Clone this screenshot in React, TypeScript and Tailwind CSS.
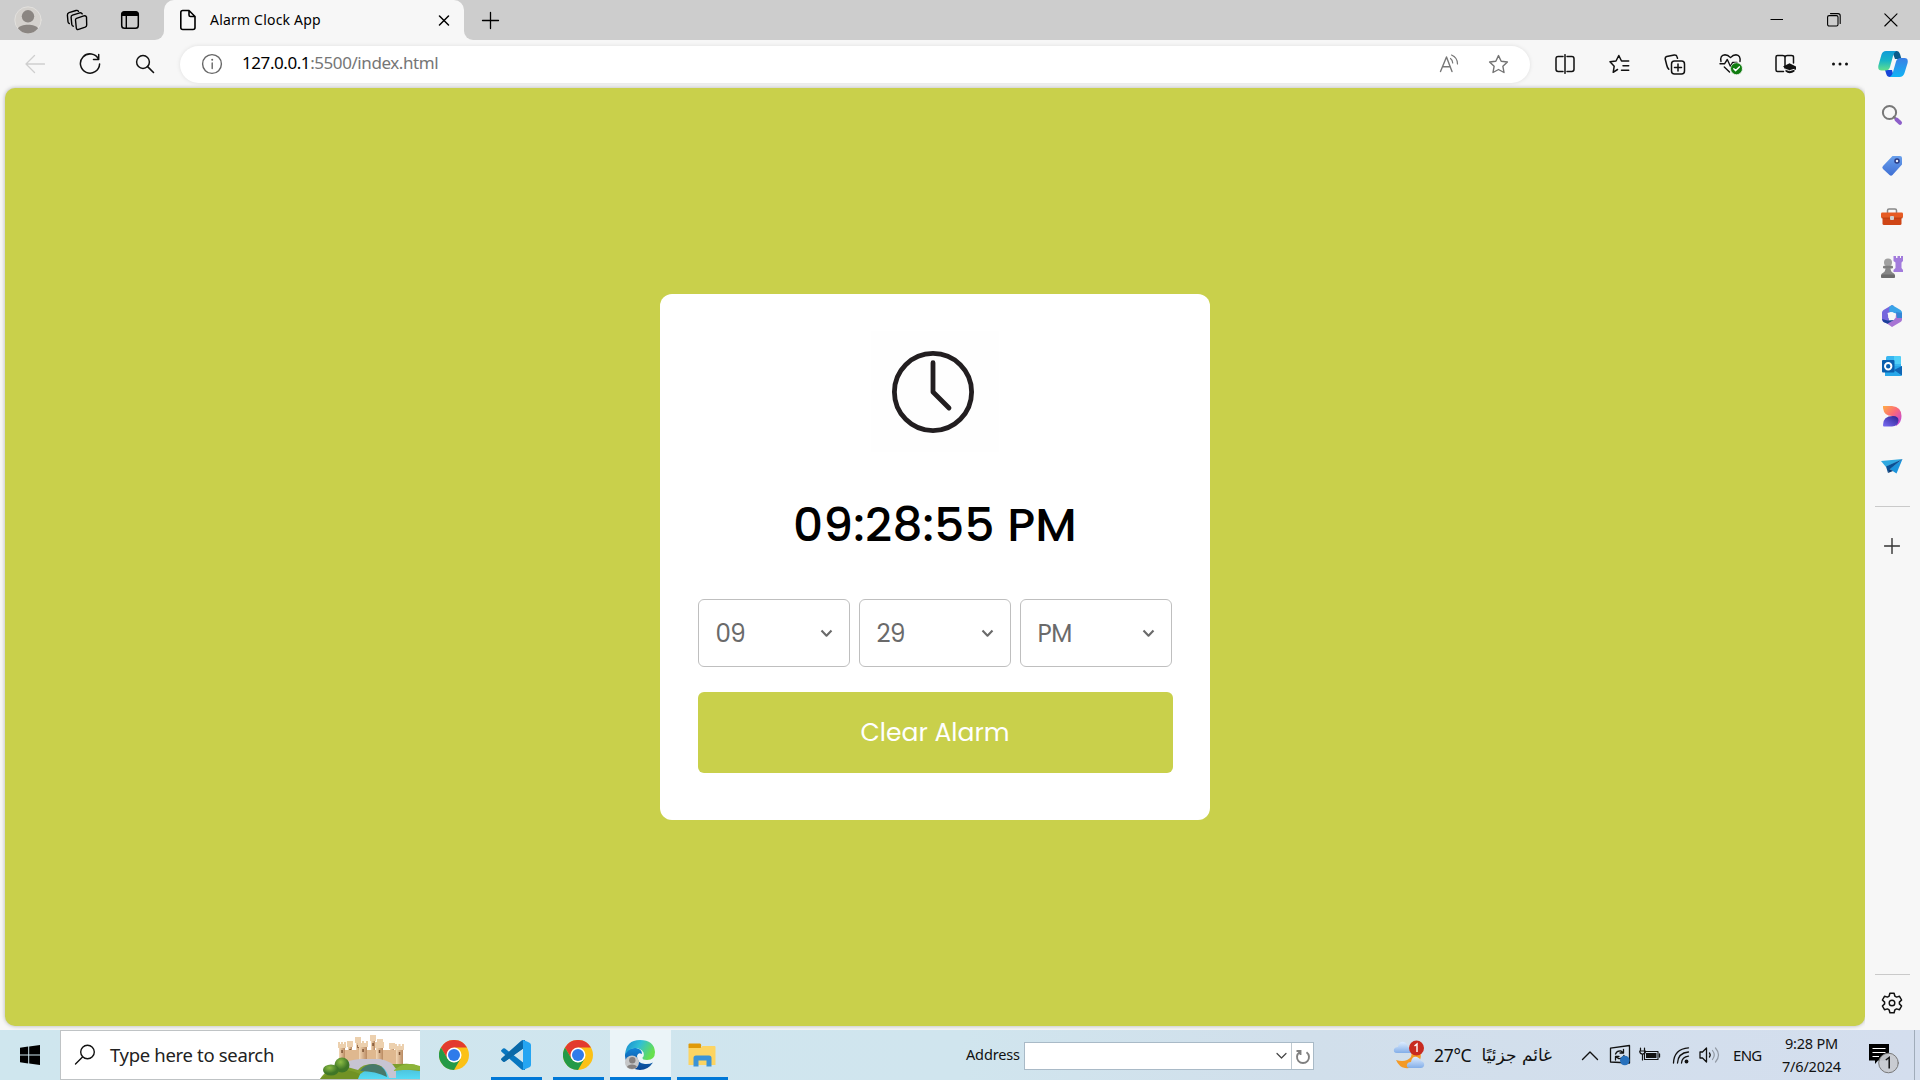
import React from "react";

type ArtProps = { w: number; h: number; className?: string; children: React.ReactNode };

function Art({ w, h, className = "", children }: ArtProps) {
  return (
    <svg
      width={w}
      height={h}
      viewBox={`0 0 ${w} ${h}`}
      fill="none"
      stroke="currentColor"
      strokeWidth={1.4}
      strokeLinecap="round"
      strokeLinejoin="round"
      className={`block shrink-0 ${className}`}
    >
      {children}
    </svg>
  );
}

function Slot({ className, children }: { className: string; children: React.ReactNode }) {
  return <div className={`flex shrink-0 items-center justify-center ${className}`}>{children}</div>;
}

const STAR = "M10.5 1.6 L13.2 7.2 L19.4 8 L14.9 12.3 L16 18.5 L10.5 15.5 L5 18.5 L6.1 12.3 L1.6 8 L7.8 7.2 Z";

function TabStrip() {
  return (
    <div className="flex h-10 shrink-0 items-center bg-[#cdcdcd] text-black">
      <Slot className="ml-[14px] w-7">
        <Art w={28} h={28}>
          <circle cx="14" cy="14" r="13.2" fill="#d4d1cd" stroke="#e2e0dd" strokeWidth="1" />
          <circle cx="14" cy="10.3" r="6.2" fill="#8b8682" stroke="none" />
          <path d="M4 22.5 C6 17.5 22 17.5 24 22.5 C21.5 25.7 18 27.4 14 27.4 C10 27.4 6.500 25.7 4 22.5Z" fill="#8b8682" stroke="none" />
        </Art>
      </Slot>
      <Slot className="ml-[24px] w-[23px]">
        <Art w={23} h={22}>
          <path d="M10.500 9.300 L17.800 6.900 Q19.800 6.200 20.500 8 L20.700 16 Q20.700 17.600 19.200 18.200 L12.600 20.400 Q10.500 20.900 10.300 19 L9.500 11 Q9.400 9.700 10.500 9.300Z" />
          <path d="M7.300 17.200 Q6 17 5.800 15.500 L5.100 8.500 Q5 6.700 6.500 6.200 L13.800 3.800 Q15.500 3.400 16.200 4.900" />
          <path d="M3.300 14.500 Q2.100 14.200 2 12.800 L1.400 6.300 Q1.300 4.300 3 3.700 L10 1.500 Q11.600 1 12.500 2.300" />
        </Art>
      </Slot>
      <Slot className="ml-[31px] w-5">
        <Art w={20} h={20}>
          <rect x="1.700" y="1.700" width="16.600" height="16.600" rx="2.800" strokeWidth="1.500" />
          <path d="M1.500 6V4Q1.500 1.500 4 1.500H16Q18.500 1.500 18.500 4V6Z" fill="currentColor" stroke="none" />
          <path d="M6.300 6V18" />
        </Art>
      </Slot>
      <div className="ml-[15px] h-10 w-[9px] bg-[#f7f7f7]">
        <div className="h-full w-full rounded-br-[10px] bg-[#cdcdcd]" />
      </div>
      <div className="flex h-10 w-[300px] items-center rounded-t-[10px] bg-[#f7f7f7]">
        <Art w={18} h={22} className="ml-[15px]">
          <path d="M3.500 1.500H10L16 7.500V18.500Q16 20.500 14 20.500H3.800Q1.800 20.500 1.800 18.500V3.500Q1.800 1.500 3.800 1.500M10 1.500V6Q10 7.500 11.500 7.500H16" strokeWidth="1.600" />
        </Art>
        <span className="ml-[13px] w-[220px] whitespace-nowrap text-[14px] leading-5 tracking-[0.2px]">Alarm Clock App</span>
        <Art w={12} h={12} className="ml-[8px]">
          <path d="M1.500 2L10.500 11M10.500 2L1.500 11" strokeWidth="1.500" />
        </Art>
      </div>
      <div className="h-10 w-[9px] bg-[#f7f7f7]">
        <div className="h-full w-full rounded-bl-[10px] bg-[#cdcdcd]" />
      </div>
      <Art w={19} h={19} className="ml-[8px]">
        <path d="M1.500 9.500H17.500M9.500 1.500V17.500" strokeWidth="1.300" />
      </Art>
      <div className="flex-1" />
      <Slot className="w-[57px]">
        <Art w={14} h={14}><path d="M.5 6.500H13" strokeWidth="1" strokeLinecap="butt" /></Art>
      </Slot>
      <Slot className="w-[57px]">
        <Art w={14} h={14}>
          <rect x=".6" y="2.600" width="10.400" height="10.400" rx="1.500" strokeWidth="1.100" />
          <path d="M3.500.6H11Q13.200.6 13.200 2.800V10.500" strokeWidth="1.100" />
        </Art>
      </Slot>
      <Slot className="w-[58px]">
        <Art w={14} h={14}><path d="M.8.8L13 13M13 .8L.8 13" strokeWidth="1.100" /></Art>
      </Slot>
    </div>
  );
}

function Toolbar() {
  return (
    <div className="flex h-12 shrink-0 items-center bg-[#f7f7f7] text-[#111]">
      <Slot className="ml-[7px] w-[55px] text-[#cfcfcf]">
        <Art w={20} h={20}><path d="M19.500 10H1M9.500 1.500L1 10L9.500 18.500" strokeWidth="1.300" /></Art>
      </Slot>
      <Slot className="w-[55px]">
        <Art w={22} h={22}><path d="M19.600 6.200A9.600 9.600 0 1 0 20.600 11M19.700 1.500V6.500H14.500" strokeWidth="1.500" /></Art>
      </Slot>
      <Slot className="w-[55px]">
        <Art w={20} h={20}><circle cx="8" cy="8" r="6.400" strokeWidth="1.500" /><path d="M12.600 12.600L18.500 18.500" strokeWidth="1.600" /></Art>
      </Slot>
      <div className="ml-2 flex h-[37px] w-[1350px] items-center rounded-full bg-white shadow-[0_0_4px_rgba(0,0,0,0.1)]">
        <Art w={22} h={22} className="ml-[21px] text-[#666]">
          <circle cx="11" cy="11" r="9.400" />
          <path d="M11.200 10V15.500" />
          <circle cx="11.200" cy="6.700" r="1" fill="currentColor" stroke="none" />
        </Art>
        <div className="-mt-[2px] ml-[19px] w-[1181px] whitespace-nowrap text-[17px] leading-6 tracking-[-0.43px] text-[#767676]">
          <span className="text-black">127.0.0.1</span>:5500/index.html
        </div>
        <Art w={20} h={20} className="ml-[16px] text-[#777]">
          <path d="M1.500 17.500L7.500 3L13 17.500M3.500 12.800H11.300" />
          <path d="M11.500 4.500Q13.600 6 13.700 9M12.500 1Q18.500 3.500 18.500 10" strokeWidth="1.200" />
        </Art>
        <Art w={21} h={20} className="ml-[29px] text-[#737373]"><path d={STAR} /></Art>
      </div>
      <Slot className="ml-[7px] w-[55px]">
        <Art w={20} h={20}>
          <path d="M8 2.500H3.200Q1 2.500 1 4.700V15.300Q1 17.500 3.200 17.500H8M12 2.500H16.800Q19 2.500 19 4.700V15.300Q19 17.500 16.800 17.500H12M10 .7V19.300" strokeWidth="1.500" />
        </Art>
      </Slot>
      <Slot className="w-[55px]">
        <Art w={21} h={20}>
          <path d="M8.500 15.500L4.200 18.300L5.200 12.200L1 7.800L7 7L9.800 1.500L12.500 7H19.700M14 11.800H19.700M12.500 16.300H19.700" strokeWidth="1.500" />
        </Art>
      </Slot>
      <Slot className="w-[55px]">
        <Art w={22} h={21}>
          <rect x="7.500" y="7" width="13" height="13" rx="3" strokeWidth="1.500" />
          <path d="M14 10V17M10.500 13.500H17.500M4.800 15.300Q3.200 13.500 2.700 11L1.200 5Q.9 3.200 2.700 2.500L10.200.9Q12.600.7 13 2.700L13.500 4.200" strokeWidth="1.500" />
        </Art>
      </Slot>
      <Slot className="w-[55px]">
        <Art w={24} h={22} className="translate-x-px">
          <path d="M2 8.500Q.7 2 6 1.700Q9 1.700 11.500 4.600Q14 1.700 17 1.700Q21.800 2 21 8.500M1 10.800H5.500L8.300 6.500L11.500 13.500L13.500 9.500H18M5.300 14L10.500 19" strokeWidth="1.400" />
          <circle cx="17.500" cy="15.700" r="6" fill="#107c10" stroke="#f7f7f7" strokeWidth=".7" />
          <path d="M14.800 15.800L16.700 17.600L20.300 13.900" stroke="#fff" strokeWidth="1.500" />
        </Art>
      </Slot>
      <Slot className="w-[55px]">
        <Art w={22} h={22}>
          <path d="M9.500 18.500H3.500Q2 18.500 2 17V4Q2 2.500 3.500 2.500H8.500Q11 2.500 11 4.500V15M11 4.500Q11 2.500 13.500 2.500H17.500Q19.500 2.500 19.500 4V10" strokeWidth="1.500" />
          <path d="M9 13.500L15.500 10.300L22 13.500V17L20.500 16V18.500Q15.500 22 11.500 18.500V15.500Z" fill="currentColor" stroke="none" />
          <path d="M11.500 16.500Q15.500 19 20 16.500" stroke="#f7f7f7" strokeWidth="1" />
        </Art>
      </Slot>
      <Slot className="w-[55px]">
        <Art w={18} h={4}>
          <g fill="currentColor" stroke="none"><circle cx="2.500" cy="2" r="1.500" /><circle cx="9" cy="2" r="1.500" /><circle cx="15.500" cy="2" r="1.500" /></g>
        </Art>
      </Slot>
      <Slot className="w-[52px]">
        <Art w={30} h={28}>
          <defs>
            <linearGradient id="cpA" x1="0" y1="0" x2="0" y2="1"><stop stopColor="#0f9bd7" /><stop offset=".5" stopColor="#18b5c6" /><stop offset="1" stopColor="#63e08c" /></linearGradient>
            <linearGradient id="cpB" x1="0" y1="0" x2="0" y2="1"><stop stopColor="#3b7fe4" /><stop offset="1" stopColor="#12b4f5" /></linearGradient>
          </defs>
          <g stroke="none">
            <path d="M14 1H19Q21 1 22 4L23.500 9H17Z" fill="#0b5c8c" />
            <path d="M7 20H14L16 27H12Q9 27 8.300 24Z" fill="#1746d8" />
            <path d="M8 1H18.500Q16 2 15 6L12 17Q11 20.500 7.500 20.500H3.500Q-.5 20.500.4 15.500L3.500 4.500Q4.600 1 8 1Z" fill="url(#cpA)" />
            <path d="M22.500 8H26.500Q30.500 8 29.600 13L26.500 23Q25.200 27 21.500 27H11.500Q14 26 15 22L18 11.500Q19 8 22.500 8Z" fill="url(#cpB)" />
          </g>
        </Art>
      </Slot>
    </div>
  );
}

function TimeSelect({ value, className }: { value: string; className: string }) {
  return (
    <div className="flex h-[68px] w-[152px] items-center justify-between rounded-[6px] border border-[#bfbfbf] pl-[17px] pr-[16px] pt-px text-[#6a6a6a]">
      <span className={`pt-px text-[24.5px] leading-none ${className}`}>{value}</span>
      <Art w={13} h={9}><path d="M1.500 1.500L6.500 6.700L11.500 1.500" strokeWidth="2.100" strokeLinecap="butt" /></Art>
    </div>
  );
}

function AlarmCard() {
  return (
    <div className="flex h-[526px] w-[550px] flex-col items-center rounded-[12px] bg-white font-['Poppins',Inter,sans-serif]">
      <div className="mt-[37px] flex h-[121px] w-[128px] items-center justify-center bg-[#fefefe]">
        <Art w={84} h={84} className="mr-[4px] text-[#221e20]">
          <circle cx="42" cy="42" r="38.600" strokeWidth="4.800" />
          <path d="M42 12.700V42L58 58" strokeWidth="4.800" />
        </Art>
      </div>
      <div className="mt-[44px] flex h-[56px] items-center whitespace-nowrap text-[47px] font-medium leading-none tracking-[0.2px] text-black">09:28:55 PM</div>
      <div className="mt-[47px] flex w-[475px] gap-[9px]">
        <TimeSelect value="09" className="tracking-[-0.6px]" />
        <TimeSelect value="29" className="tracking-[-0.6px]" />
        <TimeSelect value="PM" className="tracking-[-0.5px]" />
      </div>
      <div className="mt-[25px] flex h-[81px] w-[475px] items-center justify-center rounded-[6px] bg-[#c9d04b] text-[25px] tracking-[0.03px] text-white">Clear Alarm</div>
    </div>
  );
}

function Sidebar() {
  const slot = "h-[50px]";
  return (
    <div className="flex w-[55px] shrink-0 flex-col items-center bg-[#f7f7f7] pr-px pt-[2px] text-[#333]">
      <Slot className={slot}>
        <Art w={22} h={22}>
          <circle cx="8.500" cy="8.500" r="6.600" stroke="#777" strokeWidth="2" />
          <path d="M12.800 12.800L15 15" stroke="#777" strokeWidth="2" />
          <path d="M15.500 15.500L19 18.800" stroke="#8d5fc9" strokeWidth="4" />
        </Art>
      </Slot>
      <Slot className="h-[52px]">
        <Art w={22} h={22}>
          <defs><linearGradient id="tag" x1="0" y1="0" x2="0" y2="1"><stop stopColor="#69a0ec" /><stop offset="1" stopColor="#3f6fd4" /></linearGradient></defs>
          <path d="M11.500 1H19Q21 1 21 3V9.500L11.500 20Q10 21.500 8.500 20L2 14Q.5 12.500 2 11Z" fill="url(#tag)" stroke="none" />
          <circle cx="16" cy="6" r="2" stroke="#2a3b82" fill="#e9eefc" strokeWidth="1.500" />
        </Art>
      </Slot>
      <Slot className={slot}>
        <Art w={22} h={18}>
          <path d="M6.500 5V2.500Q6.500 1 8 1H14Q15.500 1 15.500 2.500V5" stroke="#888" strokeWidth="1.500" />
          <rect x="1.500" y="7" width="19" height="10" rx="1.500" fill="#cf4516" stroke="none" />
          <rect x="0" y="4.500" width="22" height="5.500" rx="1.200" fill="#e65b24" stroke="none" />
          <path d="M1 10H21" stroke="#ad390f" strokeWidth=".7" />
          <rect x="9" y="8" width="4" height="4" rx="1" fill="#d0d0d0" stroke="none" />
        </Art>
      </Slot>
      <Slot className="h-[49px]">
        <Art w={22} h={22}>
          <g stroke="none">
            <path d="M12.500 0H15V2H16.500V0H19V2H20V0H22V5L20.500 6.500V12L22 14V16H12.500V14L14.500 12V6.500L12.500 5Z" fill="#a27bdc" />
            <circle cx="7" cy="6.500" r="4" fill="#a0a0a0" />
            <rect x="2" y="9.800" width="10" height="2.700" rx="1.300" fill="#7e7e7e" />
            <path d="M4.500 12H9.500Q9.500 16 13 17.500Q14.300 18.500 14 21Q13.800 22 12.500 22H1.500Q.2 22 0 21Q-.3 18.500 1 17.500Q4.500 16 4.500 12Z" fill="#878787" />
            <rect x="0" y="18.500" width="14" height="3.500" rx="1.500" fill="#6c6c6c" />
          </g>
        </Art>
      </Slot>
      <Slot className={slot}>
        <Art w={20} h={22}>
          <g stroke="none">
            <path d="M10 0L1.500 5Q0 6 0 7.500V14.500Q0 16 1.500 17L6.500 19L7 14L5.500 8L12 6V1Z" fill="#7566dd" />
            <path d="M7.500 1.500L10 0L18.500 5Q20 6 20 7.500V12L14 8.500L7 6.500Z" fill="#3aa4e8" />
            <path d="M20 8V14.500Q20 16 18.500 17L10 22L5 18.500L12 15L14.500 8Z" fill="#a774d4" />
            <path d="M14 7L20 8V13L15 13Z" fill="#3486d6" />
            <path d="M0 14L5.500 15.500L12 15L5.500 18.700L1.500 17Z" fill="#1c3f99" />
            <path d="M10 7L13.700 9V13L10 15L6.300 13V9Z" fill="#f7f7f7" />
          </g>
        </Art>
      </Slot>
      <Slot className={slot}>
        <Art w={20} h={20}>
          <g stroke="none">
            <rect x="4" y="0" width="15" height="18" rx="1.500" fill="#38b6f1" />
            <path d="M12 0H17.500Q19 0 19 1.500V8H12Z" fill="#50d0f8" />
            <path d="M3 10H20V18.500Q20 20 18.500 20H3Z" fill="#28a8ea" />
            <path d="M20 10V19.500L12 14Z" fill="#1066b5" />
            <rect x="0" y="4" width="12.500" height="12.500" rx="1" fill="#0a5fae" />
          </g>
          <circle cx="6.200" cy="10.200" r="3.200" stroke="#fff" strokeWidth="2" />
        </Art>
      </Slot>
      <Slot className="h-[49px]">
        <Art w={20} h={22}>
          <defs>
            <linearGradient id="dsA" x1="0" y1="0" x2="1" y2="1"><stop stopColor="#ffae45" /><stop offset=".45" stopColor="#fb6a78" /><stop offset="1" stopColor="#b43df0" /></linearGradient>
            <linearGradient id="dsB" x1="0" y1="1" x2="1" y2="0"><stop stopColor="#7a6df5" /><stop offset="1" stopColor="#2b1f8e" /></linearGradient>
          </defs>
          <path d="M1 1H10Q19.500 2 19.500 11Q19.500 18 14 21L10 11Q2 11 1 3Z" fill="url(#dsA)" stroke="none" />
          <path d="M1 20Q1 11 11 11Q16.500 11 16.500 15.500Q16 21 10 21.500H2Q1 21.500 1 20Z" fill="url(#dsB)" stroke="none" />
        </Art>
      </Slot>
      <Slot className="h-[51px]">
        <Art w={22} h={16}>
          <g stroke="none">
            <path d="M0 3L21.500 1L5 9Z" fill="#2fa8e0" />
            <path d="M21.500 1L15.500 15.500L8.500 11Z" fill="#1b94dc" />
            <path d="M5 8.500L21.500 1L9 11L7 15Z" fill="#0a4f93" />
            <path d="M8.500 11L12 13L7 15Z" fill="#0c3b74" />
          </g>
        </Art>
      </Slot>
      <div className="mt-[15px] h-px w-[35px] bg-[#cacaca]" />
      <Art w={16} h={16} className="mt-[31px]"><path d="M.5 8H15.500M8 .5V15.500" /></Art>
      <div className="flex-1" />
      <div className="h-px w-[35px] bg-[#cacaca]" />
      <Art w={22} h={22} className="mb-[16px] mt-[17px] text-[#111]">
        <path d="M8.900 1.200H13.100L13.900 4.200L15.500 5.100L18.500 4.300L20.600 8L18.400 10.100V11.900L20.600 14L18.500 17.700L15.500 16.900L13.900 17.800L13.100 20.800H8.900L8.100 17.800L6.500 16.900L3.500 17.700L1.400 14L3.600 11.900V10.100L1.400 8L3.500 4.300L6.500 5.100L8.100 4.200Z" strokeWidth="1.500" />
        <circle cx="11" cy="11" r="2.800" />
      </Art>
    </div>
  );
}

function ChromeLogo() {
  return (
    <Art w={30} h={30}>
      <g stroke="none">
        <circle cx="15" cy="15" r="15" fill="#fbc116" />
        <path d="M2 7.500A15 15 0 0 1 28 7.500H15L8.500 18.800Z" fill="#e33b2e" />
        <path d="M2 7.500A15 15 0 0 0 15 30L21.500 18.800L15 22.500L8.500 18.800Z" fill="#249a47" />
        <circle cx="15" cy="15" r="7.500" fill="#fff" />
        <circle cx="15" cy="15" r="6" fill="#2f7bea" />
      </g>
    </Art>
  );
}

function Castle() {
  const tower = (x: number, y: number, w: number, h: number) => (
    <g key={`${x}-${y}`}>
      <rect x={x} y={y + 3} width={w} height={h} fill="url(#stone)" />
      <path d={`M${x - 1} ${y}h2v2h${w / 2 - 2}v-2h2v2h${w / 2 - 2}v-2h2v6h-${w + 2}z`} fill="#ecd0ae" />
      <rect x={x + w / 2 - 0.7} y={y + 8} width="1.5" height="3" fill="#7d5334" />
    </g>
  );
  return (
    <Art w={100} h={46}>
      <defs>
        <linearGradient id="stone" x1="0" y1="0" x2="1" y2="0"><stop stopColor="#f4d9b8" /><stop offset="1" stopColor="#b98a61" /></linearGradient>
        <linearGradient id="lake" x1="0" y1="0" x2="0" y2="1"><stop stopColor="#4bbdd6" /><stop offset="1" stopColor="#55dbf5" /></linearGradient>
        <radialGradient id="bush" cx=".4" cy=".3"><stop stopColor="#8dbd45" /><stop offset="1" stopColor="#3f7626" /></radialGradient>
      </defs>
      <g stroke="none">
        {tower(28, 8, 4, 22)}
        {tower(36, 4, 4, 24)}
        {tower(51, 2, 4, 24)}
        {tower(58, 6, 4, 24)}
        {tower(70, 10, 4, 20)}
        <rect x="21" y="17" width="60" height="16" fill="#dfb88f" />
        {tower(19, 9, 6, 24)}
        {tower(39, 8, 8, 24)}
        {tower(56, 9, 7, 24)}
        {tower(76, 11, 7, 22)}
        <path d="M0 46Q8 33 28 31H80Q100 29 100 38V46Z" fill="#7d9e2c" />
        <path d="M36 46Q44 34 62 34L100 38V46Z" fill="url(#lake)" />
        <path d="M20 32Q28 27 40 26H60Q72 28 76 36V45H69Q65 31 53 31Q42 31 38 37Z" fill="#c7c4d2" />
        <path d="M40 38Q45 31 53 31Q65 32 67 44Q56 38 40 38Z" fill="#47796a" />
        <path d="M73 38Q84 27 100 33V37Q88 36 73 38Z" fill="#8db43a" />
        <path d="M0 46Q18 31 40 41L38 46Z" fill="#719224" />
        <circle cx="22" cy="32" r="7.500" fill="url(#bush)" />
        <ellipse cx="11" cy="37" rx="8" ry="5.500" fill="url(#bush)" />
      </g>
    </Art>
  );
}

function TaskApp({ className, active, children }: { className: string; active?: boolean; children: React.ReactNode }) {
  return (
    <div className={`flex h-[50px] shrink-0 flex-col items-center ${active ? "bg-[#ebf4f8]" : ""} ${className}`}>
      <div className="flex h-[47px] items-center pr-px pt-[3px]">{children}</div>
      <div className="h-[3px] w-full bg-[#0078d7]" />
    </div>
  );
}

function Taskbar() {
  return (
    <div className="flex h-[50px] shrink-0 items-center bg-[linear-gradient(90deg,#cfe6ee_0%,#d0e5ee_50%,#d1dfeb_68%,#d4deee_100%)] text-[#111]">
      <Slot className="h-full w-[60px]">
        <Art w={20} h={20}>
          <path d="M0 2.800L8.200 1.600V9.500H0ZM9.200 1.500L20 0V9.500H9.200ZM0 10.500H8.200V18.400L0 17.200ZM9.200 10.500H20V20L9.200 18.500Z" fill="#000" stroke="none" />
        </Art>
      </Slot>
      <div className="flex h-[50px] w-[360px] items-end border border-r-0 border-[#bfc3c5] bg-white">
        <Art w={22} h={22} className="mb-[13px] ml-[13px]">
          <circle cx="13.500" cy="8" r="6.800" /><path d="M8.500 13L1.500 20" />
        </Art>
        <span className="mb-[11px] ml-[14px] w-[210px] whitespace-nowrap text-[18.500px] leading-[26px] tracking-[-0.33px] text-[#222]">Type here to search</span>
        <Castle />
      </div>
      <div className="ml-[19px] mt-0"><ChromeLogo /></div>
      <TaskApp className="ml-[22px] w-[51px]">
        <Art w={30} h={30}>
          <g stroke="none">
            <path d="M0 10.500L2 8.500Q3 8 4 8.500L24 24V30H22Q21 30 20 29L.5 11.700Q0 11 0 10.500Z" fill="#0877c0" />
            <path d="M0 19.500Q0 19 .5 18.300L20 1Q21 0 22 0H24V7L4 21.500Q3 22 2 21.500Z" fill="#0d6eb3" />
            <path d="M0 19.500L20 1.500L23 8L4 21.500Q3 22 2 21.500Z" fill="#0969a8" />
            <path d="M22 0Q22.800 0 28.500 2.700Q30 3.400 30 5V25Q30 26.600 28.500 27.300L22 30Z" fill="#25a5f2" />
          </g>
        </Art>
      </TaskApp>
      <TaskApp className="ml-[11px] w-[51px]"><ChromeLogo /></TaskApp>
      <TaskApp className="ml-[6px] w-[61px]" active>
        <Art w={30} h={30}>
          <defs>
            <linearGradient id="edT" x1="0" y1="0" x2="1" y2=".4"><stop stopColor="#1687d0" /><stop offset=".5" stopColor="#31bfd5" /><stop offset="1" stopColor="#67e04f" /></linearGradient>
            <linearGradient id="edB" x1="0" y1="0" x2="0" y2="1"><stop stopColor="#1285d8" /><stop offset="1" stopColor="#0a4692" /></linearGradient>
          </defs>
          <g stroke="none">
            <path d="M0 14Q3 7 11 8Q17 9 17 14Q13 12 12 16Q12 23 20 24Q24 24.500 28 22.500Q23 30 15 30Q1 29 0 16Z" fill="url(#edB)" />
            <path d="M0 15Q1 0 15 0Q29 0 30 12Q30 20 22 20Q17 20 17.500 17.500Q19.500 16 18.500 12.500Q16 8 10 8Q3 8.500 0 15Z" fill="url(#edT)" />
            <circle cx="7" cy="22.500" r="7" fill="#c6c7c8" />
            <circle cx="7.300" cy="20.300" r="3.200" fill="#85817f" />
            <path d="M2 27Q3 24.500 7 24.500Q11 24.500 12 27Q7 31 2 27Z" fill="#85817f" />
          </g>
        </Art>
      </TaskApp>
      <TaskApp className="ml-[6px] w-[51px]">
        <Art w={28} h={24}>
          <g stroke="none">
            <path d="M.5 1.500Q.5.5 1.500.5H12Q13 .5 13.200 2L13 5H.5Z" fill="#e09a08" />
            <path d="M.5 5H12.500L14.500 3H26.500Q27.500 3 27.500 4V22H.5Z" fill="#fcd462" />
            <path d="M5.500 23.500V15Q5.500 12.500 8 12.500H21Q23.500 12.500 23.500 15V23.500H18.500V17.500H10.500V23.500Z" fill="#3b93d7" />
          </g>
        </Art>
      </TaskApp>
      <span className="-mt-[2px] ml-[238px] w-[58px] whitespace-nowrap text-[14.500px] leading-5 tracking-[-0.15px]">Address</span>
      <div className="mt-[2px] flex h-7 w-[290px] items-center justify-end border border-[#a9bac7] bg-white">
        <Art w={11} h={8} className="mr-[4px]"><path d="M1 1.500L5.500 6L10 1.500" stroke="#444" strokeWidth="1.200" /></Art>
        <div className="flex h-full w-[22px] items-center justify-center border-l border-[#bfc9d0]">
          <Art w={16} h={16} className="translate-y-px"><path d="M4.500 3.200A6 6 0 1 0 11.500 3.200M1.500 2H5.500V6" stroke="#808080" strokeWidth="1.900" strokeLinecap="butt" strokeLinejoin="miter" /></Art>
        </div>
      </div>
      <Art w={32} h={30} className="ml-[79px]">
        <defs><linearGradient id="cloud" x1="0" y1="0" x2="0" y2="1"><stop stopColor="#ddecff" /><stop offset="1" stopColor="#83aee8" /></linearGradient></defs>
        <g stroke="none">
          <path d="M27 11Q29 17 26 22Q21 29 12 28Q6 27 3 20Q13 23 18 17Q19 14 18.500 12Z" fill="#f49a26" />
          <path d="M4 13Q0 13 1 9Q2 7 5 7Q6 1 11 2Q14 3 15 7Q19 8 18 13Z" fill="url(#cloud)" />
          <path d="M17 28Q13 28 14 24Q15 22 18 22Q19 16 24 17Q27 18 28 21Q32 22 31 26Q30 28 28 28Z" fill="url(#cloud)" />
          <circle cx="23.500" cy="8" r="7.500" fill="#c82b20" />
        </g>
        <path d="M21.500 6L24 4V12" stroke="#fff" strokeWidth="1.400" strokeLinecap="butt" strokeLinejoin="miter" />
      </Art>
      <span className="ml-[9px] w-[48px] whitespace-nowrap text-[17.500px] leading-6 tracking-[-0.3px]">27°C</span>
      <span dir="rtl" className="w-[70px] whitespace-nowrap text-right text-[17px] leading-6 font-['Segoe_UI','DejaVu_Sans',sans-serif]">غائم جزئيًا</span>
      <Art w={18} h={11} className="ml-[29px]"><path d="M1.500 9.500L9 2L16.500 9.500" /></Art>
      <Art w={22} h={22} className="ml-[10px]">
        <path d="M1.500 4.200L20.500 1.500V19L1.500 18Z" strokeWidth="1.300" />
        <path d="M6.500 10Q8 6.500 12 7L14 8.500M14.500 5.500V9H11M15 11.500Q13.500 15.500 9.500 14.500L7 13M6.500 16V12.500H10" strokeWidth="1.300" />
        <circle cx="15.800" cy="16.500" r="4.800" fill="#2871bd" stroke="none" />
      </Art>
      <Art w={22} h={16} className="ml-[8px]">
        <path d="M1.500 1V4M5.500 1V4M.7 4H6.500Q6.500 7 3.600 7Q.7 7 .7 4M3.500 7V13" strokeWidth="1.200" />
        <rect x="5.500" y="4.500" width="13.500" height="8" strokeWidth="1.100" /><rect x="7" y="6" width="10.500" height="5" fill="currentColor" stroke="none" />
        <path d="M20.500 7V10" strokeWidth="1.300" />
      </Art>
      <Art w={18} h={18} className="ml-[11px]">
        <path d="M1.500 17Q2 3 16.500 1.800M5.500 17Q6 7 16.500 6M9.500 17Q10 11 16.500 10.200" strokeWidth="1.300" />
        <circle cx="14.500" cy="15.500" r="1.900" fill="currentColor" stroke="none" />
      </Art>
      <Art w={22} h={18} className="ml-[9px]">
        <path d="M1 6H3.500L7.500 2V16L3.500 12H1ZM10.500 7Q12 9 10.500 11" strokeWidth="1.300" />
        <path d="M13.500 4.500Q17 9 13.500 13.500M16.500 2Q22.500 9 16.500 16" stroke="#929aa5" strokeWidth="1.200" />
      </Art>
      <span className="ml-[12px] w-[32px] whitespace-nowrap text-[15px] leading-5 tracking-[-0.7px]">ENG</span>
      <div className="ml-[4px] flex w-[85px] flex-col items-center whitespace-nowrap text-[14.500px] leading-[23px] tracking-[-0.2px]">
        <span>9:28 PM</span>
        <span>7/6/2024</span>
      </div>
      <Art w={32} h={32} className="ml-[14px] mt-[6px]">
        <path d="M1 2H21V18.500H10L7 22V18.500H1Z" fill="#000" stroke="none" />
        <path d="M4.500 6.500H17.500M4.500 10.500H17.500M4.500 14.500H11" stroke="#fff" strokeWidth="1.200" strokeLinecap="butt" />
        <circle cx="20.500" cy="21" r="9.800" fill="#c8cbd0" fillOpacity=".94" stroke="#777" strokeWidth="1" />
        <path d="M17.800 18L21.200 15.500V26.500" stroke="#111" strokeWidth="1.500" strokeLinecap="butt" strokeLinejoin="miter" />
      </Art>
      <div className="ml-auto mr-[5px] h-full w-px bg-[#a0acba]" />
    </div>
  );
}

export default function App() {
  return (
    <div className="flex h-[1080px] w-[1920px] flex-col overflow-hidden bg-[#f7f7f7] font-['Segoe_UI','Noto_Sans',sans-serif]">
      <TabStrip />
      <Toolbar />
      <div className="flex h-[942px] shrink-0">
        <main className="ml-[5px] flex h-[938px] w-[1860px] items-center justify-center rounded-[10px] bg-[#c9d04b] shadow-[0_0_4px_rgba(0,0,0,0.28)]">
          <AlarmCard />
        </main>
        <Sidebar />
      </div>
      <Taskbar />
    </div>
  );
}
